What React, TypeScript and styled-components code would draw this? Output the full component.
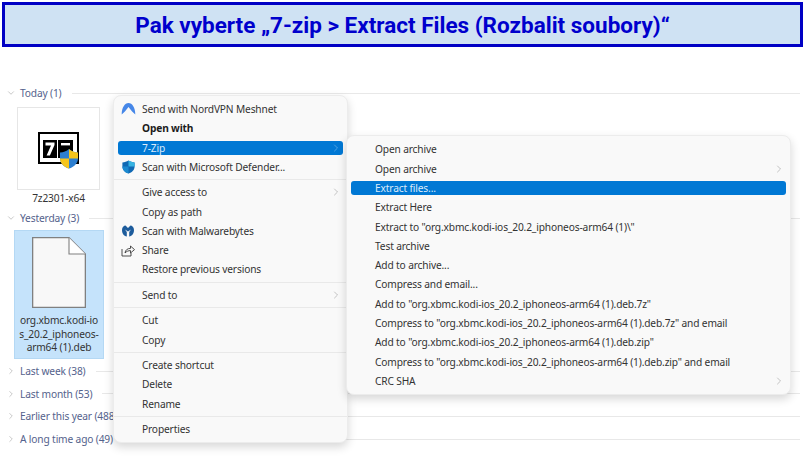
import React from "react";
import styled, { createGlobalStyle } from "styled-components";
import { ChevronDown, ChevronRight } from "lucide-react";

const Global = createGlobalStyle`
  html, body { margin: 0; padding: 0; background: #fff; width: 806px; height: 457px; overflow: hidden; }
  * { box-sizing: border-box; }
`;

const Page = styled.div`
  width: 806px;
  height: 457px;
  padding-top: 2px;
  font-family: "Noto Sans", "Liberation Sans", sans-serif;
  position: relative;
  overflow: hidden;
`;

const Banner = styled.div`
  margin: 0 3px 0 2px;
  height: 45px;
  border: 3px solid #0000c4;
  background: #cfe2f3;
  color: #0000cd;
  font-family: Roboto, "Liberation Sans", sans-serif;
  font-weight: 700;
  font-size: 22.5px;
  display: flex;
  align-items: center;
  justify-content: center;
  white-space: nowrap;
`;

const Explorer = styled.div`
  padding: 39px 6px 0 6px;
`;

const GroupHead = styled.div<{ $after?: number }>`
  height: 14px;
  margin-bottom: ${(p) => p.$after ?? 8.7}px;
  display: flex;
  align-items: center;
  gap: 4px;
  color: #54628c;
  font-size: 10.2px;
  letter-spacing: -0.15px;
  white-space: nowrap;
  &::after {
    content: "";
    flex: 1;
    height: 1px;
    background: #e8e8e8;
    margin-left: 6px;
  }
  svg { flex: none; color: #7d7d7d; }
`;

const Tiles = styled.div`
  display: flex;
  flex-direction: column;
  align-items: flex-start;
`;

const Thumb = styled.div`
  width: 83px;
  height: 83px;
  margin-left: 11px;
  border: 1px solid #e6e6e6;
  display: flex;
  align-items: center;
  justify-content: center;
  padding-top: 4px;
`;

const TileLabel = styled.div`
  width: 83px;
  margin: 1px 0 6px 11px;
  height: 14px;
  text-align: center;
  color: #333;
  font-size: 10.2px;
  letter-spacing: -0.15px;
  line-height: 14px;
`;

const Selected = styled.div`
  width: 90px;
  height: 129px;
  margin: 0 0 5px 8px;
  background: #c5e3fb;
  border: 1px solid #b4d8f4;
  display: flex;
  flex-direction: column;
  align-items: center;
  padding-top: 6px;
`;

const SelectedLabel = styled.div`
  margin-top: 6px;
  text-align: center;
  color: #333;
  font-size: 10.2px;
  letter-spacing: -0.15px;
  line-height: 13.6px;
  white-space: nowrap;
`;

const Menu = styled.div<{ $left: number; $top: number; $width: number; $padTop?: number }>`
  position: absolute;
  left: ${(p) => p.$left}px;
  top: ${(p) => p.$top}px;
  width: ${(p) => p.$width}px;
  padding: ${(p) => p.$padTop ?? 3.35}px 0 3.35px;
  background: #f9f9f9;
  border: 1px solid #ececec;
  border-radius: 8px;
  box-shadow: 0 4px 10px rgba(0, 0, 0, 0.16);
  display: flex;
  flex-direction: column;
`;

const Row = styled.div<{ $active?: boolean; $bold?: boolean }>`
  height: 14px;
  margin: 2.65px 4px;
  padding-left: 24px;
  padding-right: 5px;
  position: relative;
  display: flex;
  align-items: center;
  justify-content: space-between;
  border-radius: 3px;
  white-space: nowrap;
  font-size: 10.2px;
  letter-spacing: -0.15px;
  font-weight: ${(p) => (p.$bold ? 700 : 400)};
  color: ${(p) => (p.$active ? "#dbeafa" : p.$bold ? "#1c1c1c" : "#333")};
  background: ${(p) => (p.$active ? "#0078d4" : "transparent")};
  svg.chev { color: ${(p) => (p.$active ? "#9cc8ec" : "#8a8a8a")}; margin-right: -4px; flex: none; }
`;

const RowIcon = styled.span`
  position: absolute;
  left: 2px;
  top: -1px;
  width: 16px;
  height: 16px;
  display: flex;
  align-items: center;
  justify-content: center;
`;

const Sep = styled.div`
  height: 1px;
  margin: 2.6px 0;
  background: #e9e9e9;
`;

const SevenZip = () => (
  <svg width="41" height="37" viewBox="0 0 41 37" style={{ overflow: "visible" }}>
    <rect x="0" y="0" width="41" height="32" fill="#000" />
    <rect x="2" y="2" width="37" height="28" fill="#fff" />
    <rect x="5" y="8" width="14" height="18" fill="#000" />
    <rect x="20" y="8" width="15" height="18" fill="#000" />
    <path d="M7.5 10.5h9v2.6l-4.6 10.4H8.6l4.4-10h-5.5z" fill="#fff" />
    <path d="M23 11h9v2.4H23z" fill="#fff" />
    <path d="M22 20.5c3.4 0 6.6-1.3 9-3.5 2.4 2.2 5.6 3.5 9 3.5v6c0 4.6-4 8.7-9 10-5-1.3-9-5.4-9-10z" fill="#2d7fd0" />
    <path d="M31 17c2.4 2.2 5.6 3.5 9 3.5v6h-9z" fill="#f6c51c" />
    <path d="M22 26.5h9v10c-5-1.3-9-5.4-9-10z" fill="#f6c51c" />
  </svg>
);

const Nord = () => (
  <svg width="15" height="13" viewBox="0 0 15 13">
    <path d="M0.7 12.5C0.7 5.5 3.8 1 7.5 1s6.8 4.5 6.8 11.5l-3.2-3L7.5 5 3.9 9.5z" fill="#4687e8" />
  </svg>
);

const Defender = () => (
  <svg width="13" height="14" viewBox="0 0 13 14">
    <path d="M6.5 0.5C8.3 1.7 10.4 2.3 12.6 2.4v4.2c0 3.4-2.4 5.9-6.1 7-3.7-1.1-6.1-3.6-6.1-7V2.4C2.6 2.3 4.7 1.7 6.5 0.5z" fill="#1069b4" />
    <path d="M6.5 0.5C8.3 1.7 10.4 2.3 12.6 2.4v4.1H6.5z" fill="#36b3e2" />
    <path d="M0.4 6.5h6.1v7.1c-3.7-1.1-6.1-3.6-6.1-7z" fill="#1c8ad0" />
  </svg>
);

const Malwarebytes = () => (
  <svg width="14" height="12" viewBox="0 0 14 12">
    <path d="M1 5C1 2 3 .5 4.5 .5L7 3 9.5 .5C11 .5 13 2 13 5c0 3.5-2 6-4.8 6.5V7L10 4.5 7 6.5 4 4.5 5.8 7v4.5C3 11 1 8.5 1 5z" fill="#1d5c9c" />
  </svg>
);

const ShareIcon = () => (
  <svg width="14" height="13" viewBox="0 0 14 13" fill="none" stroke="#3a3a3a" strokeWidth="0.9">
    <path d="M1 5v7h9V9" />
    <path d="M4 9c.3-3 2.5-4.6 5.5-4.6V2l4 3.6-4 3.4V6.6C7.5 6.6 5.5 7.3 4 9z" />
  </svg>
);

const FileIcon = () => (
  <svg width="54" height="71" viewBox="0 0 54 71">
    <path d="M0.65 0.65H37L53.35 17V70.35H0.65z" fill="#f8f8f8" stroke="#808080" strokeWidth="1.3" />
    <path d="M37 0.65V17H53.35" fill="#fff" stroke="#808080" strokeWidth="1.1" />
  </svg>
);

const Chev = () => <ChevronRight className="chev" size={12} strokeWidth={1} />;

const collapsed = [
  ["Last week (38)", 8.7],
  ["Last month (53)", 8.7],
  ["Earlier this year (488)", 8.7],
  ["A long time ago (49)", 0],
] as const;

const sub: [string, boolean?, boolean?][] = [
  ["Open archive"],
  ["Open archive", true],
  ["Extract files...", false, true],
  ["Extract Here"],
  ['Extract to "org.xbmc.kodi-ios_20.2_iphoneos-arm64 (1)\\"'],
  ["Test archive"],
  ["Add to archive..."],
  ["Compress and email..."],
  ['Add to "org.xbmc.kodi-ios_20.2_iphoneos-arm64 (1).deb.7z"'],
  ['Compress to "org.xbmc.kodi-ios_20.2_iphoneos-arm64 (1).deb.7z" and email'],
  ['Add to "org.xbmc.kodi-ios_20.2_iphoneos-arm64 (1).deb.zip"'],
  ['Compress to "org.xbmc.kodi-ios_20.2_iphoneos-arm64 (1).deb.zip" and email'],
  ["CRC SHA", true],
];

export default function App() {
  return (
    <Page>
      <Global />
      <Banner>Pak vyberte „7-zip &gt; Extract Files (Rozbalit soubory)“</Banner>
      <Explorer>
        <GroupHead $after={7}>
          <ChevronDown size={10} strokeWidth={1} />
          Today (1)
        </GroupHead>
        <Tiles>
          <Thumb><SevenZip /></Thumb>
          <TileLabel>7z2301-x64</TileLabel>
        </Tiles>
        <GroupHead $after={5}>
          <ChevronDown size={10} strokeWidth={1} />
          Yesterday (3)
        </GroupHead>
        <Tiles>
          <Selected>
            <FileIcon />
            <SelectedLabel>
              org.xbmc.kodi-io<br />s_20.2_iphoneos-<br />arm64 (1).deb
            </SelectedLabel>
          </Selected>
        </Tiles>
        {collapsed.map(([label, after]) => (
          <GroupHead key={label} $after={after}>
            <ChevronRight size={10} strokeWidth={1} />
            {label}
          </GroupHead>
        ))}
      </Explorer>

      <Menu $left={113} $top={95} $width={235}>
        <Row><RowIcon><Nord /></RowIcon>Send with NordVPN Meshnet</Row>
        <Row $bold>Open with</Row>
        <Row $active>7-Zip<Chev /></Row>
        <Row><RowIcon><Defender /></RowIcon>Scan with Microsoft Defender...</Row>
        <Sep />
        <Row>Give access to<Chev /></Row>
        <Row>Copy as path</Row>
        <Row><RowIcon><Malwarebytes /></RowIcon>Scan with Malwarebytes</Row>
        <Row><RowIcon><ShareIcon /></RowIcon>Share</Row>
        <Row>Restore previous versions</Row>
        <Sep />
        <Row>Send to<Chev /></Row>
        <Sep />
        <Row>Cut</Row>
        <Row>Copy</Row>
        <Sep />
        <Row>Create shortcut</Row>
        <Row>Delete</Row>
        <Row>Rename</Row>
        <Sep />
        <Row>Properties</Row>
      </Menu>

      <Menu $left={346} $top={135} $width={445} $padTop={3.8}>
        {sub.map(([label, chev, active], i) => (
          <Row key={i} $active={active}>
            {label}
            {chev && <Chev />}
          </Row>
        ))}
      </Menu>
    </Page>
  );
}
